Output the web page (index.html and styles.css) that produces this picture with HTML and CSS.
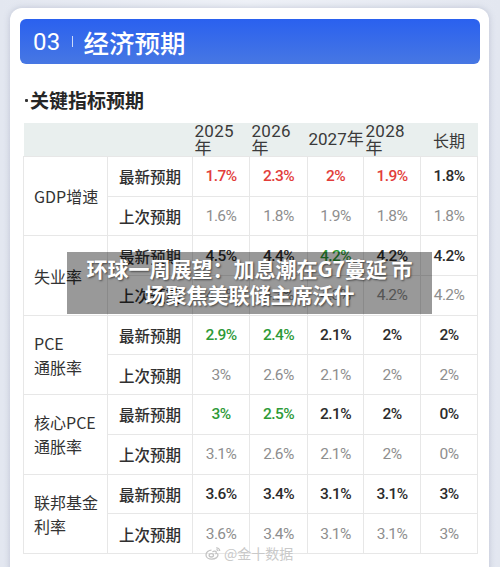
FILE: index.html
```html
<!DOCTYPE html>
<html lang="zh">
<head>
<meta charset="utf-8">
<link rel="stylesheet" href="styles.css">
</head>
<body>
<div class="page">
  <div class="card">
    <div class="banner">
      <span class="num">03</span>
      <span class="sep"></span>
      <span class="btitle">经济预期</span>
    </div>
    <div class="subtitle"><span class="dot"></span>关键指标预期</div>
    <div class="table-wrap">
      <table class="tbl">
        <colgroup>
          <col class="c-label"><col class="c-sub"><col class="c-v1"><col class="c-v2"><col class="c-v3"><col class="c-v4"><col class="c-v5">
        </colgroup>
        <thead>
          <tr class="hrow">
            <th></th><th></th>
            <th class="yr">2025<br>年</th>
            <th class="yr">2026<br>年</th>
            <th class="yr one">2027年</th>
            <th class="yr">2028<br>年</th>
            <th class="lt">长期</th>
          </tr>
        </thead>
        <tbody>
          <tr>
            <td class="lbl" rowspan="2">GDP增速</td>
            <td class="sub">最新预期</td>
            <td class="v new red">1.7%</td><td class="v new red">2.3%</td><td class="v new red">2%</td><td class="v new red">1.9%</td><td class="v new">1.8%</td>
          </tr>
          <tr>
            <td class="sub">上次预期</td>
            <td class="v old">1.6%</td><td class="v old">1.8%</td><td class="v old">1.9%</td><td class="v old">1.8%</td><td class="v old">1.8%</td>
          </tr>
          <tr>
            <td class="lbl" rowspan="2">失业率</td>
            <td class="sub">最新预期</td>
            <td class="v new">4.5%</td><td class="v new">4.4%</td><td class="v new green">4.2%</td><td class="v new">4.2%</td><td class="v new">4.2%</td>
          </tr>
          <tr>
            <td class="sub">上次预期</td>
            <td class="v old">4.5%</td><td class="v old">4.3%</td><td class="v old">4.3%</td><td class="v old">4.2%</td><td class="v old">4.2%</td>
          </tr>
          <tr>
            <td class="lbl" rowspan="2">PCE<br>通胀率</td>
            <td class="sub">最新预期</td>
            <td class="v new green">2.9%</td><td class="v new green">2.4%</td><td class="v new">2.1%</td><td class="v new">2%</td><td class="v new">2%</td>
          </tr>
          <tr>
            <td class="sub">上次预期</td>
            <td class="v old">3%</td><td class="v old">2.6%</td><td class="v old">2.1%</td><td class="v old">2%</td><td class="v old">2%</td>
          </tr>
          <tr>
            <td class="lbl" rowspan="2">核心PCE<br>通胀率</td>
            <td class="sub">最新预期</td>
            <td class="v new green">3%</td><td class="v new green">2.5%</td><td class="v new">2.1%</td><td class="v new">2%</td><td class="v new">0%</td>
          </tr>
          <tr>
            <td class="sub">上次预期</td>
            <td class="v old">3.1%</td><td class="v old">2.6%</td><td class="v old">2.1%</td><td class="v old">2%</td><td class="v old">0%</td>
          </tr>
          <tr>
            <td class="lbl" rowspan="2">联邦基金<br>利率</td>
            <td class="sub">最新预期</td>
            <td class="v new">3.6%</td><td class="v new">3.4%</td><td class="v new">3.1%</td><td class="v new">3.1%</td><td class="v new">3%</td>
          </tr>
          <tr>
            <td class="sub">上次预期</td>
            <td class="v old">3.6%</td><td class="v old">3.4%</td><td class="v old">3.1%</td><td class="v old">3.1%</td><td class="v old">3%</td>
          </tr>
        </tbody>
      </table>
    </div>
  </div>
  <div class="overlay">环球一周展望：加息潮在G7蔓延 市<br>场聚焦美联储主席沃什</div>
  <div class="watermark">
    <svg class="wb" width="17" height="14" viewBox="0 0 17 14" fill="none" stroke="#c4c4c4" stroke-width="1.3">
      <path d="M6.5 4.2C3.6 4.2 1 6.4 1 8.9c0 2.5 2.7 4.2 5.8 4.2 3.6 0 6.2-2 6.2-4 0-1.4-1.3-1.8-2-1.6.6-1.5.2-2.6-1.6-2.4-.9.1-1.6.5-2 .7"/>
      <ellipse cx="6.3" cy="9.3" rx="2.2" ry="1.7"/>
      <path d="M11.2 1.8c1.9-.2 3.6 1.3 3.5 3.2"/>
      <path d="M11.4 3.6c.9 0 1.6.7 1.5 1.5"/>
    </svg>
    <span>@金十数据</span>
  </div>
</div>
</body>
</html>
```

FILE: styles.css
```css
html, body {
  margin: 0;
  padding: 0;
}
body {
  width: 500px;
  height: 567px;
  overflow: hidden;
  background: linear-gradient(90deg, #e3e7f0 0%, #eef1f7 50%, #e3e7f0 100%);
  font-family: "Noto Sans CJK SC", "Noto Sans", sans-serif;
}
.page {
  position: relative;
  width: 500px;
  height: 567px;
  box-sizing: border-box;
  padding: 8px 11px 0 10px;
}
.card {
  background: #ffffff;
  border-radius: 12px;
  box-shadow: 0 0 6px rgba(120, 130, 160, 0.35);
  height: 600px;
  box-sizing: border-box;
  padding: 11px 9px 0 10px;
}
.banner {
  height: 45px;
  border-radius: 6px;
  background: linear-gradient(180deg, #2a61ef 0%, #4777e3 100%);
  display: flex;
  align-items: center;
  padding-left: 13px;
  color: #ffffff;
}
.num {
  font-family: Roboto, "Liberation Sans", sans-serif;
  font-size: 24px;
  line-height: 1;
  letter-spacing: 0.3px;
  margin-top: 1px;
}
.sep {
  width: 1px;
  height: 11px;
  background: rgba(255, 255, 255, 0.75);
  margin: 0 11px 0 11px;
}
.btitle {
  font-size: 25.5px;
  font-weight: 500;
  line-height: 1;
}
.subtitle {
  margin-top: 24px;
  margin-left: 5px;
  font-size: 19px;
  font-weight: 700;
  color: #262626;
  line-height: 24px;
  display: flex;
  align-items: center;
}
.dot {
  width: 3px;
  height: 3px;
  border-radius: 1px;
  background: #333333;
  margin: 1px 2px 0 0;
}
.table-wrap {
  margin-top: 11px;
  padding: 0 3px 0 3px;
}
.tbl {
  width: 454px;
  border-collapse: collapse;
  table-layout: fixed;
}
.c-label { width: 84px; }
.c-sub { width: 85px; }
.c-v1 { width: 57px; }
.c-v2 { width: 58px; }
.c-v3 { width: 56px; }
.c-v4 { width: 57px; }
.c-v5 { width: 57px; }
.hrow {
  height: 33px;
  background: #e9efee;
}
.hrow th {
  padding: 0;
  border: none;
  font-weight: 400;
  color: #3a3a3a;
  vertical-align: middle;
}
.yr {
  font-family: Roboto, "Noto Sans CJK SC", sans-serif;
  font-size: 17px;
  line-height: 16.5px;
  text-align: left;
  padding-left: 2px !important;
  letter-spacing: 0.3px;
}
.yr.one {
  white-space: nowrap;
  padding-left: 1px !important;
  letter-spacing: 0;
}
.lt {
  font-size: 16px;
  text-align: center;
}
.tbl td {
  border: 1px solid #e7e7e7;
  height: 39.7px;
  padding: 0;
  box-sizing: border-box;
  text-align: center;
  vertical-align: middle;
}
.tbl td.lbl {
  text-align: left;
  padding-left: 10px;
  font-size: 16px;
  line-height: 24px;
  color: #333333;
}
.tbl td.sub {
  font-size: 15.5px;
  font-weight: 500;
  color: #303030;
}
.v {
  font-family: Roboto, "Liberation Sans", sans-serif;
  font-size: 15.5px;
  letter-spacing: -0.6px;
}
.v.new {
  font-weight: 500;
  color: #2b2b2b;
}
.v.old {
  font-weight: 400;
  color: #8e8e8e;
}
.v.new.red { color: #e23d3a; }
.v.new.green { color: #2e9a38; }
.overlay {
  position: absolute;
  left: 67px;
  top: 252px;
  width: 365px;
  height: 62px;
  box-sizing: border-box;
  padding-top: 3px;
  background: rgba(0, 0, 0, 0.4);
  color: #ffffff;
  font-size: 21px;
  font-weight: 700;
  line-height: 26px;
  text-align: center;
  text-shadow: 1px 1px 2px rgba(0, 0, 0, 0.55);
}
.watermark {
  position: absolute;
  left: 205px;
  top: 544px;
  display: flex;
  align-items: center;
  gap: 2px;
  font-size: 14px;
  line-height: 18px;
  color: #c9c9c9;
  text-shadow: 0 0 1px #ffffff;
}
.wb {
  display: block;
}
```
